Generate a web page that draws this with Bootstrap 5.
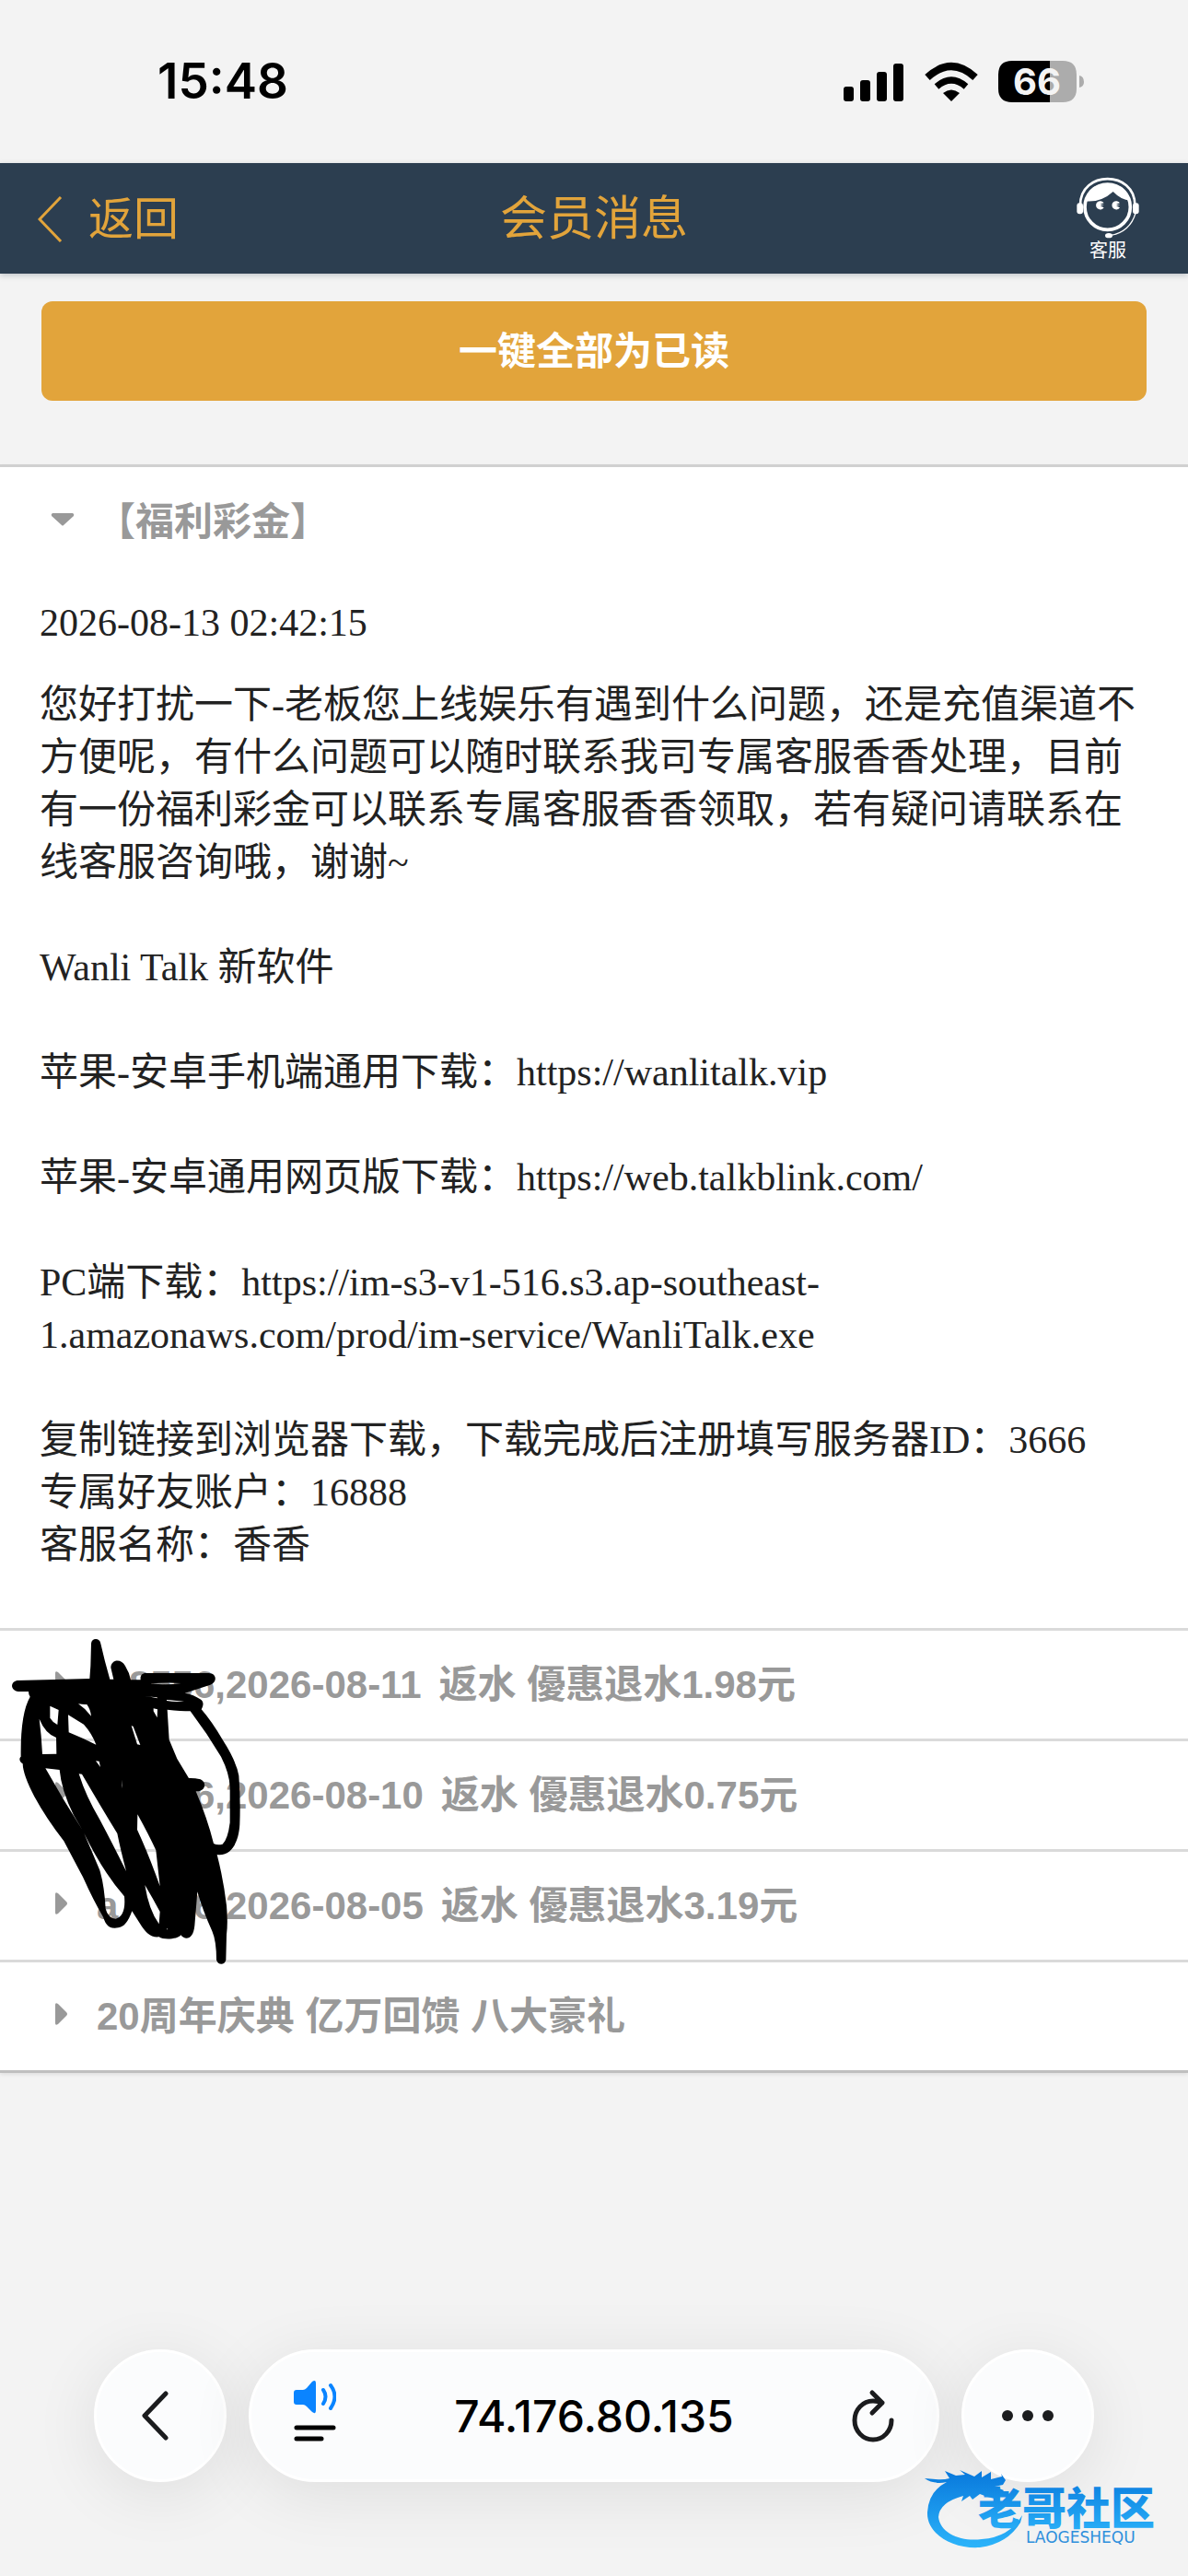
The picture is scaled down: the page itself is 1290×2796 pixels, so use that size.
<!DOCTYPE html>
<html lang="zh-CN">
<head>
<meta charset="utf-8">
<meta name="viewport" content="width=device-width, initial-scale=1">
<title>会员消息</title>
<link href="https://cdn.jsdelivr.net/npm/bootstrap@5.3.0/dist/css/bootstrap.min.css" rel="stylesheet">
<style>
  body { background: #f3f3f3; color: #222; font-family: "Liberation Sans", "Noto Sans CJK SC", sans-serif; font-size: 42px; line-height: 57px; }
  svg { display: block; flex: none; }
  .status-bar { height: 177px; padding: 0 113px 2px 171px; color: #000; font-family: Inter, sans-serif; }
  .clock { font-size: 53px; font-weight: 600; line-height: 64px; }
  .top-nav { height: 120px; padding: 2px 41px 0; background: #2c3e50; box-shadow: 0 2px 6px rgba(44, 62, 80, .25); }
  .top-nav a, .top-nav h1 { color: #e2a43b; }
  .back-link { gap: 28px; font-size: 49px; }
  .page-title { font-size: 51px; font-weight: 400; line-height: 60px; }
  .top-nav .support-link { margin-right: 12px; color: #fff; font-size: 20px; line-height: 24px; }
  .read-all { height: 108px; border: 0; border-radius: 12px; background: #e2a43b; color: #fff; font-size: 42px; font-weight: 700; }
  .read-all:hover { background: #d3952c; color: #fff; }
  .read-area { padding: 30px 45px 69px; }
  .messages { border-top: 3px solid #d0d0d0; border-bottom: 3px solid #bfbfbf; box-shadow: 0 2px 4px rgba(0, 0, 0, .08); }
  .message + .message { border-top: 3px solid #dadada; }
  .message-head { height: 117px; padding: 0 43px 0 60px; border: 0; background: none; color: #999; font-weight: 700; text-align: left; }
  .message-head.opened { padding: 2px 43px 0 55px; }
  .arrow-slot { width: 45px; padding-bottom: 6px; }
  .opened .arrow-slot { width: 50px; }
  .account { width: 140px; }
  .day { margin-right: 19px; }
  .message-body { padding: 24px 43px 61px; font-family: "Liberation Serif", "Noto Sans CJK SC", serif; }
  .message-body p { margin-bottom: 57px; }
  .message-body .sent-at { margin-bottom: 32px; }
  .scribble { left: 0; top: 1233px; pointer-events: none; }
  .browser-bar { gap: 24px; padding: 0 102px 102px; }
  .glass { height: 144px; border: 3px solid #fff; border-radius: 72px; background: #fbfcfd; box-shadow: 0 12px 72px rgba(0, 0, 0, .09); }
  .round { width: 144px; flex: none; }
  .address { min-width: 0; padding: 0 46px; }
  .bare { border: 0; padding: 0; background: none; }
  .go-back { padding: 0 8px 0 0; }
  .host { width: 100%; min-width: 0; border: 0; background: none; color: #000; font-family: Inter, sans-serif; font-size: 48px; font-weight: 500; text-align: center; }
  .watermark { right: 18px; bottom: 28px; width: 270px; height: 96px; }
</style>
<script src="https://cdn.jsdelivr.net/npm/bootstrap@5.3.0/dist/js/bootstrap.bundle.min.js"></script>
</head>
<body>
<div class="d-flex flex-column min-vh-100 position-relative">

  <div class="status-bar d-flex align-items-center justify-content-between">
    <span class="clock">15:48</span>
    <svg width="263" height="48" viewBox="0 0 263 48" role="img" aria-label="信号 无线网络 电量 66%">
      <g><rect x="2" y="30" width="11" height="16" rx="3"/><rect x="20" y="23" width="11" height="23" rx="3"/><rect x="38" y="14" width="11" height="32" rx="3"/><rect x="56" y="5" width="11" height="41" rx="3"/></g>
      <path d="M119 46 L110 37 Q119 30 128 37Z"/>
      <path d="M103 30 Q119 16 135 30" fill="none" stroke="#000" stroke-width="7"/>
      <path d="M93 20 Q119 -4 145 20" fill="none" stroke="#000" stroke-width="8"/>
      <path d="M226 2H240Q255 2 255 17V32Q255 47 240 47H226Z" fill="#acacac"/>
      <path d="M226 2H185Q170 2 170 17V32Q170 47 185 47H226Z"/>
      <path d="M258 18Q263 19 263 25Q263 30 258 31Z" fill="#acacac"/>
      <text x="212" y="39" text-anchor="middle" font-family="Inter, sans-serif" font-size="40" font-weight="700" fill="#f4f4f4">66</text>
    </svg>
  </div>

  <nav class="top-nav d-flex align-items-center">
    <div class="col d-flex">
      <a href="#" class="back-link d-flex align-items-center text-decoration-none">
        <svg width="27" height="50" viewBox="0 0 27 50" fill="none" stroke="#e2a43b" stroke-width="3"><path d="M25 1 2 25 25 49"/></svg>返回
      </a>
    </div>
    <h1 class="page-title m-0 text-nowrap">会员消息</h1>
    <div class="col d-flex justify-content-end">
      <a href="#" class="support-link d-flex flex-column align-items-center text-decoration-none">
        <svg width="68" height="68" viewBox="0 0 204 204" fill="none" stroke="#fff">
          <path d="M12 92C12 -22 190 -22 190 92" stroke-width="8"/>
          <circle cx="101" cy="98" r="74" stroke-width="11"/>
          <path d="M28 79Q36 24 101 22Q164 24 174 77Q145 75 119 48Q80 84 28 79Z" fill="#fff" stroke="none"/>
          <rect x="1" y="85" width="20" height="36" rx="9" fill="#fff" stroke="none"/><rect x="183" y="85" width="20" height="36" rx="9" fill="#fff" stroke="none"/>
          <path d="M192 118Q174 180 108 191" stroke-width="4"/><ellipse cx="105" cy="191" rx="12" ry="8" fill="#fff" stroke="none"/>
          <path d="M89 85A14 14 0 1 0 89 100L77 94 90 92 77 89ZM141 85A14 14 0 1 0 141 100L129 94 142 92 129 89Z" fill="#fff" stroke="none"/>
        </svg>
        客服
      </a>
    </div>
  </nav>

  <div class="read-area"><button type="button" class="btn read-all w-100">一键全部为已读</button></div>

  <main class="messages bg-white position-relative">
    <section class="message">
      <button type="button" class="message-head opened d-flex align-items-center w-100" aria-expanded="true">
        <span class="arrow-slot"><svg width="26" height="14" viewBox="0 0 26 14"><path d="M2 0H24Q26 1 25 3L14 13Q13 14 12 13L1 3Q0 1 2 0Z" fill="#999"/></svg></span>【福利彩金】
      </button>
      <div class="message-body">
        <p class="sent-at">2026-08-13 02:42:15</p>
        <p>您好打扰一下-老板您上线娱乐有遇到什么问题，还是充值渠道不方便呢，有什么问题可以随时联系我司专属客服香香处理，目前有一份福利彩金可以联系专属客服香香领取，若有疑问请联系在线客服咨询哦，谢谢~</p>
        <p>Wanli Talk 新软件</p>
        <p>苹果-安卓手机端通用下载：https://wanlitalk.vip</p>
        <p>苹果-安卓通用网页版下载：https://web.talkblink.com/</p>
        <p>PC端下载：https://im-s3-v1-516.s3.ap-southeast-<wbr>1.amazonaws.com/prod/im-service/WanliTalk.exe</p>
        <p class="mb-0">复制链接到浏览器下载，下载完成后注册填写服务器ID：3666<br>专属好友账户：16888<br>客服名称：香香</p>
      </div>
    </section>
    <section class="message">
      <button type="button" class="message-head d-flex align-items-center w-100" aria-expanded="false">
        <span class="arrow-slot"><svg width="13" height="24" viewBox="0 0 13 24"><path d="M0 2Q0-1 3 1L12 10Q14 12 12 14L3 23Q0 25 0 22Z" fill="#999"/></svg></span>
        <span class="account text-end">8556,</span><span class="day">2026-08-11</span><span>返水 優惠退水1.98元</span>
      </button>
    </section>
    <section class="message">
      <button type="button" class="message-head d-flex align-items-center w-100" aria-expanded="false">
        <span class="arrow-slot"><svg width="13" height="24" viewBox="0 0 13 24"><path d="M0 2Q0-1 3 1L12 10Q14 12 12 14L3 23Q0 25 0 22Z" fill="#999"/></svg></span>
        <span class="account text-end">6,</span><span class="day">2026-08-10</span><span>返水 優惠退水0.75元</span>
      </button>
    </section>
    <section class="message">
      <button type="button" class="message-head d-flex align-items-center w-100" aria-expanded="false">
        <span class="arrow-slot"><svg width="13" height="24" viewBox="0 0 13 24"><path d="M0 2Q0-1 3 1L12 10Q14 12 12 14L3 23Q0 25 0 22Z" fill="#999"/></svg></span>
        <span class="account d-flex justify-content-between"><span>a</span><span>6,</span></span><span class="day">2026-08-05</span><span>返水 優惠退水3.19元</span>
      </button>
    </section>
    <section class="message">
      <button type="button" class="message-head d-flex align-items-center w-100" aria-expanded="false">
        <span class="arrow-slot"><svg width="13" height="24" viewBox="0 0 13 24"><path d="M0 2Q0-1 3 1L12 10Q14 12 12 14L3 23Q0 25 0 22Z" fill="#999"/></svg></span>
        <span>20周年庆典 亿万回馈 八大豪礼</span>
      </button>
    </section>

    <!-- hand-drawn marker over the account names -->
    <svg class="scribble position-absolute" width="430" height="420" viewBox="0 0 1290 1260" aria-hidden="true">
      <path fill-rule="evenodd" d="M297 132C298 112 326 113 328 132L342 190 358 248H370L361 210C362 182 396 180 408 205Q422 228 426 250H458C456 237 462 228 475 228H680C706 228 709 258 685 266L602 293Q632 298 652 313C664 320 664 332 656 346Q690 385 725 445Q770 515 778 562Q784 640 781 720C778 780 752 826 707 819Q728 900 738 985Q743 1040 738 1080L736 1162C732 1180 710 1180 705 1162Q705 1100 691 1068Q660 1000 643 940L634 1050C630 1095 604 1100 589 1081C580 1095 532 1098 518 1087C490 1090 474 1070 462 1053L430 1003Q412 1055 385 1057C352 1064 342 1040 336 1022Q305 970 270 892L208 775Q150 700 112 630Q75 560 74 523C62 515 62 505 68 500Q66 360 98 305Q93 300 93 288H60C34 285 32 258 55 252L180 249 292 246 295 205ZM490 262Q545 268 590 261Q540 258 490 262ZM466 303 Q490 304 513 310 L512 307 466 303ZM543 318 Q570 323 600 320 Q565 317 543 315ZM500 343 513 346 512 373 500 352ZM545 347 Q590 352 620 352 Q675 425 720 500Q748 555 749 600L749 715Q742 770 725 785Q708 790 696 783Q675 700 638 613C670 615 675 583 653 574Q632 569 615 570L577 507 551 445ZM163 335 191 348 187 396Q172 389 163 374ZM128 377 Q135 430 138 492L184 491 183 438Q147 424 128 377ZM222 364 273 395Q300 425 313 461Q270 440 224 421ZM255 328 Q272 331 283 330 Q295 347 297 368Q280 345 255 328ZM428 399 434 402 457 462 447 460ZM312 514 323 515 327 534ZM148 538 194 543 Q200 610 240 691 L268 738 Q205 640 148 538ZM257 556 267 557 Q330 665 382 750 Q392 800 411 873Q365 780 325 705 Q280 630 257 556ZM448 688 Q485 755 508 805 L521 922 Q485 820 447 738ZM472 918 Q500 965 521 1005 L518 1045 Q485 1000 472 918ZM274 750 Q335 875 405 955 Q411 1018 377 1028Q352 1026 344 995 Q340 920 325 870 Q300 810 274 750ZM396 575 399 603 397 594ZM544 1060h2v3h-2Z"/>
    </svg>
  </main>

  <footer class="browser-bar d-flex mt-auto">
    <button type="button" class="glass round go-back d-flex align-items-center justify-content-center" aria-label="后退">
      <svg width="32" height="54" viewBox="0 0 32 54" fill="none" stroke="#1b1c1e" stroke-width="5" stroke-linecap="round" stroke-linejoin="round"><path d="M26 3 3 27 26 51"/></svg>
    </button>
    <div class="glass address d-flex align-items-center flex-fill">
      <button type="button" class="bare" aria-label="页面菜单">
        <svg width="46" height="78" viewBox="0 0 46 78">
          <path d="M3 11H10Q12 11 14 9L20 2Q24-1 24 4V33Q24 38 20 35L14 29Q12 27 10 27H3Q0 27 0 24V14Q0 11 3 11Z" fill="#0a84ff"/>
          <path d="M32 11Q37 18 32 26M40 6Q49 18 40 31" fill="none" stroke="#0a84ff" stroke-width="4" stroke-linecap="round"/>
          <path d="M3 52H43M3 64H30" stroke="#000" stroke-width="5" stroke-linecap="round"/>
        </svg>
      </button>
      <input class="host" type="text" value="74.176.80.135" aria-label="网址">
      <button type="button" class="bare" aria-label="重新加载">
        <svg width="46" height="58" viewBox="0 0 46 58" fill="none" stroke="#1b1c1e" stroke-width="5" stroke-linecap="round" stroke-linejoin="round"><path d="M33 15Q28 13 23 13A20 21 0 1 0 43 34M22 4 33 15 22 26"/></svg>
      </button>
    </div>
    <button type="button" class="glass round d-flex align-items-center justify-content-center p-0" aria-label="更多">
      <svg width="56" height="12" viewBox="0 0 56 12" fill="#1b1c1e"><circle cx="6" cy="6" r="6"/><circle cx="28" cy="6" r="6"/><circle cx="50" cy="6" r="6"/></svg>
    </button>
  </footer>

  <!-- community watermark floating above the toolbar -->
  <svg class="watermark position-absolute" viewBox="0 0 270 96" role="img" aria-label="老哥社区 LAOGESHEQU">
    <defs>
      <linearGradient id="sea" x1="0" y1="0" x2="0" y2="1"><stop offset="0" stop-color="#0878dc"/><stop offset="1" stop-color="#2cb4fa"/></linearGradient>
    </defs>
    <path d="M2 18 14 19Q22 20 29 18L24 10 36 15 46 14 40 9 56 16 64 10 64 17 74 11 74 19 86 16 85 13 90 20 87 25 78 27 88 31 84 36 74 35 82 41 70 38 62 35 54 41 51 37 42 43 44 37Q18 44 17 60C19 78 42 87 64 84Q94 82 108 58L106 66Q92 89 62 93C32 95 4 78 5 55Q6 32 26 22Q12 25 2 18Z" fill="url(#sea)"/>
    <text x="60" y="68" font-family="Noto Sans CJK SC, sans-serif" font-size="48" font-weight="900" fill="url(#sea)">老哥社区</text>
    <text x="112" y="88" font-family="DejaVu Sans, sans-serif" font-size="17" fill="#2f8fdc">LAOGESHEQU</text>
  </svg>
</div>
</body>
</html>
